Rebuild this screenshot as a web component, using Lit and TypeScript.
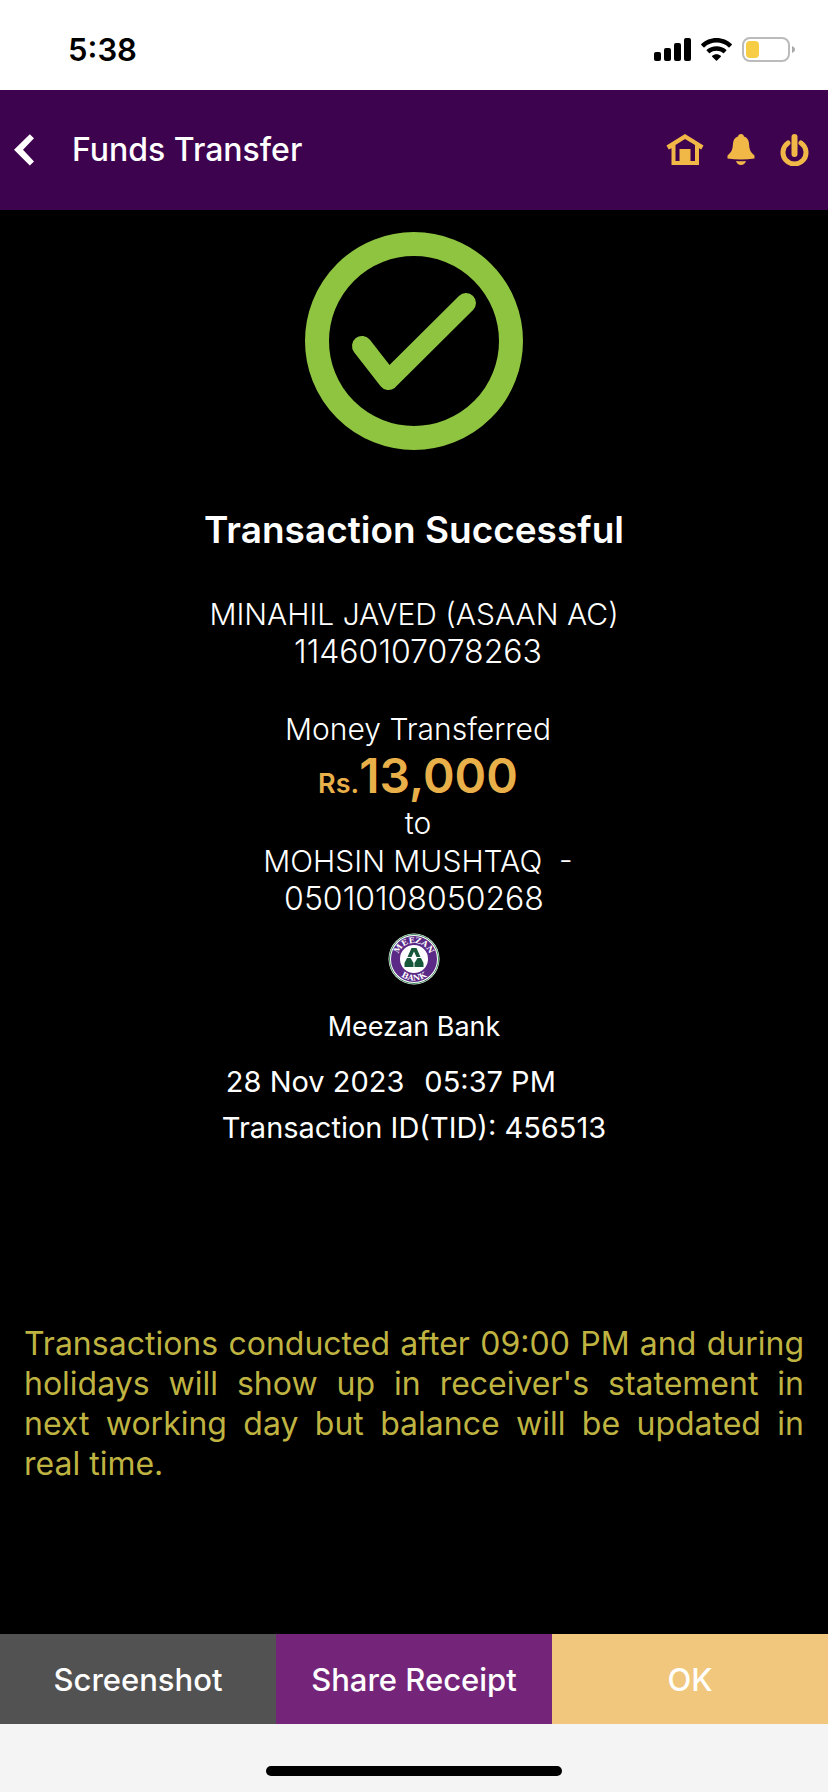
import { LitElement, html, css, svg } from "lit";
import { customElement, property } from "lit/decorators.js";

@customElement("status-bar")
class StatusBar extends LitElement {
  @property() time = "";

  static styles = css`
    :host {
      display: flex;
      align-items: center;
      justify-content: space-between;
      height: 90px;
      padding: 10px 33px 0 68px;
      box-sizing: border-box;
      background: #fff;
      color: #000;
    }
    .time {
      font-size: 31px;
      font-weight: 600;
      line-height: 40px;
    }
    .signals {
      display: flex;
      align-items: center;
      gap: 10px;
    }
    svg {
      display: block;
    }
  `;

  render() {
    return html`
      <span class="time">${this.time}</span>
      <div class="signals">
        <svg width="37" height="24" viewBox="0 0 37 24" role="img" aria-label="Mobile signal">
          <rect x="0" y="14" width="7" height="9" rx="2" />
          <rect x="10" y="10" width="7" height="13" rx="2" />
          <rect x="20" y="5" width="7" height="18" rx="2" />
          <rect x="30" y="0" width="7" height="23" rx="2" />
        </svg>
        <svg width="31" height="24" viewBox="0 0 31 24" role="img" aria-label="Wi-Fi">
          <path
            d="M15.500 0C21.400 0 26.900 2.300 30.700 6.100Q31.200 6.600 30.700 7.100L28.500 9.200Q28 9.700 27.500 9.200C24.200 6.200 20 4.600 15.500 4.600S6.800 6.200 3.500 9.200Q3 9.700 2.500 9.200L.3 7.100Q-.2 6.600 .3 6.100C4.100 2.300 9.600 0 15.500 0Z"
          />
          <path
            d="M15.500 8.200C19.300 8.200 22.700 9.600 25.200 11.800Q25.700 12.300 25.200 12.800L23 15Q22.500 15.400 22 15C20.200 13.500 18 12.700 15.500 12.700S10.800 13.500 9 15Q8.500 15.400 8 15L5.800 12.800Q5.300 12.300 5.800 11.800C8.300 9.600 11.700 8.200 15.500 8.200Z"
          />
          <path
            d="M15.500 16.300C17.300 16.300 18.700 16.900 19.800 17.800Q20.300 18.200 19.800 18.700L16 22.600Q15.500 23 15 22.600L11.200 18.700Q10.700 18.200 11.200 17.800C12.300 16.900 13.700 16.300 15.500 16.300Z"
          />
        </svg>
        <svg width="53" height="26" viewBox="0 0 53 26" role="img" aria-label="Battery low">
          <rect x="1" y="1" width="46" height="23" rx="7" fill="none" stroke="#bbb" stroke-width="2" />
          <rect x="4" y="4" width="13" height="17" rx="4" fill="#f7cd46" />
          <path d="M50 9C54 10.500 54 14.500 50 16Z" fill="#aaa" />
        </svg>
      </div>
    `;
  }
}

@customElement("nav-header")
class NavHeader extends LitElement {
  @property() heading = "";

  static styles = css`
    :host {
      display: flex;
      align-items: center;
      height: 120px;
      padding: 0 18px 0 12px;
      box-sizing: border-box;
      background: #3e034f;
      color: #fff;
    }
    h1 {
      flex: 1;
      margin: 0 0 0 36px;
      font-size: 32px;
      font-weight: 500;
      line-height: 40px;
    }
    button {
      display: block;
      padding: 0;
      border: 0;
      background: none;
      color: inherit;
      cursor: pointer;
    }
    .actions {
      display: flex;
      align-items: center;
      gap: 23px;
      color: #f2b847;
    }
    svg {
      display: block;
      fill: currentColor;
    }
  `;

  render() {
    return html`
      <button aria-label="Back">
        <svg width="24" height="32" viewBox="0 0 24 32">
          <path d="M17.800 0.200L22 4.200L11 15.800L22 27.400L17.800 31.500L2 15.800Z" />
        </svg>
      </button>
      <h1>${this.heading}</h1>
      <div class="actions">
        <button aria-label="Home">
          <svg width="38" height="32" viewBox="0 0 38 32">
            <path
              fill-rule="evenodd"
              d="M19 0L37.500 11.500L35.300 15.500L33 14.200V31H5.500V14.200L2.700 15.500L0.500 11.500ZM19 5L9.500 11V27H13.500V15H24.500V27H29V11Z"
            />
          </svg>
        </button>
        <button aria-label="Notifications">
          <svg width="28" height="32" viewBox="1 0.500 28 32">
            <path
              d="M15 0.500C16.700 0.500 17.800 1.500 18 3C21.200 4 22.700 6.500 23 10C23.400 16.500 24.500 18.500 28.500 22V25Q22 26 15 26T1.500 25V22C5.500 18.500 6.600 16.500 7 10C7.300 6.500 8.800 4 12 3C12.200 1.500 13.300 0.500 15 0.500Z"
            />
            <path d="M10 27.500Q15 28 20 27.500C19 30 17.500 31.500 15 31.500S11 30 10 27.500Z" />
          </svg>
        </button>
        <button aria-label="Log out">
          <svg width="32" height="32" viewBox="-1 0.500 32 32">
            <path
              d="M9 9.500A11.500 11.500 0 1 0 22 9.500"
              fill="none"
              stroke="currentColor"
              stroke-width="5"
              stroke-linecap="round"
            />
            <rect x="12.500" y="0.500" width="6" height="23" rx="3" />
          </svg>
        </button>
      </div>
    `;
  }
}

const successMark = svg`
  <circle cx="109" cy="109" r="97" fill="none" stroke="#8fc441" stroke-width="24" />
  <path
    d="M57 114L83.500 148L161 71"
    fill="none"
    stroke="#8fc441"
    stroke-width="20"
    stroke-linecap="round"
    stroke-linejoin="round"
  />
`;

const bankLogo = svg`
  <circle cx="26" cy="26" r="25.500" fill="#fff" />
  <circle cx="26" cy="26" r="24.500" fill="none" stroke="#3d8a5c" stroke-width="1" />
  <circle cx="26" cy="26" r="18.500" fill="none" stroke="#5a2a86" stroke-width="9" />
  <path d="M23.500 15H28.500L32.500 24H28.500L26 18.500L23.500 24H19.500Z" fill="#17583a" />
  <path d="M19 25H22.500L25.500 30V34H16.500V30Z" fill="#17583a" />
  <path d="M29.500 25H33L35.500 30V34H26.500V30Z" fill="#17583a" />
  <path id="upper" d="M11 32.200A16.200 16.200 0 1 1 41 32.200" fill="none" />
  <path id="lower" d="M4.500 26A21.500 21.500 0 0 0 47.500 26" fill="none" />
  <text class="seal" text-anchor="middle"><textPath href="#upper" startOffset="50%">MEEZAN</textPath></text>
  <text class="seal" text-anchor="middle"><textPath href="#lower" startOffset="50%">BANK</textPath></text>
`;

@customElement("app-root")
class AppRoot extends LitElement {
  static styles = css`
    :host {
      display: flex;
      flex-direction: column;
      min-height: 100vh;
      background: #000;
      color: #fff;
      font-family: Inter, "Liberation Sans", sans-serif;
    }
    main {
      flex: 1;
      display: flex;
      flex-direction: column;
      align-items: center;
      padding: 22px 24px 0;
      text-align: center;
    }
    svg {
      display: block;
    }
    h2 {
      margin: 56px 0 0;
      font-size: 37px;
      font-weight: 600;
      line-height: 48px;
    }
    p {
      margin: 0;
    }
    .party,
    .transfer {
      font-size: 30px;
      font-weight: 300;
      line-height: 38px;
    }
    .party {
      margin-top: 41px;
    }
    .transfer {
      margin-top: 39px;
    }
    .account {
      font-size: 32px;
    }
    .lead {
      padding-left: 8px;
    }
    .amount {
      color: #e9b04a;
      font-size: 48px;
      font-weight: 600;
      line-height: 56px;
    }
    .currency {
      font-size: 27px;
      line-height: 1;
    }
    .logo {
      margin-top: 15px;
    }
    .seal {
      fill: #fff;
      font-family: "DejaVu Serif", serif;
      font-size: 8px;
      font-weight: 700;
    }
    .bank {
      margin-top: 24px;
      font-size: 27px;
      line-height: 36px;
    }
    .details {
      margin-top: 14px;
      font-size: 29px;
      line-height: 46px;
      text-align: left;
    }
    .when {
      display: flex;
      gap: 20px;
      padding-left: 4px;
    }
    .notice {
      margin-top: 173px;
      color: #bfb341;
      font-size: 32px;
      line-height: 40px;
      text-align: justify;
    }
    .buttons {
      display: grid;
      grid-template-columns: repeat(3, 1fr);
    }
    .buttons button {
      height: 90px;
      padding: 0;
      border: 0;
      color: #fff;
      font-family: inherit;
      font-size: 31px;
      font-weight: 500;
      cursor: pointer;
    }
    .shot {
      background: #525252;
    }
    .share {
      background: #74257a;
    }
    .ok {
      background: #f0c77c;
    }
    footer {
      display: flex;
      justify-content: center;
      padding: 42px 0 16px;
      background: #f4f4f4;
    }
    .handle {
      width: 296px;
      height: 10px;
      border-radius: 5px;
      background: #000;
    }
  `;

  render() {
    return html`
      <status-bar time="5:38"></status-bar>
      <nav-header heading="Funds Transfer"></nav-header>
      <main>
        <svg width="218" height="218" viewBox="0 0 218 218" role="img" aria-label="Success">${successMark}</svg>
        <h2>Transaction Successful</h2>
        <div class="party">
          <p>MINAHIL JAVED (ASAAN AC)</p>
          <p class="account lead">11460107078263</p>
        </div>
        <div class="transfer">
          <p class="lead">Money Transferred</p>
          <p class="amount lead"><span class="currency">Rs.</span>13,000</p>
          <p class="lead">to</p>
          <p class="lead">MOHSIN MUSHTAQ&nbsp; -</p>
          <p class="account">05010108050268</p>
        </div>
        <svg class="logo" width="52" height="52" viewBox="0 0 52 52" role="img" aria-label="Meezan Bank logo">
          ${bankLogo}
        </svg>
        <p class="bank">Meezan Bank</p>
        <div class="details">
          <p class="when"><span>28 Nov 2023</span><span>05:37 PM</span></p>
          <p>Transaction ID(TID): 456513</p>
        </div>
        <p class="notice">
          Transactions conducted after 09:00 PM and during holidays will show up in receiver's statement in next working
          day but balance will be updated in real time.
        </p>
      </main>
      <div class="buttons">
        <button class="shot">Screenshot</button>
        <button class="share">Share Receipt</button>
        <button class="ok">OK</button>
      </div>
      <footer><div class="handle"></div></footer>
    `;
  }
}
